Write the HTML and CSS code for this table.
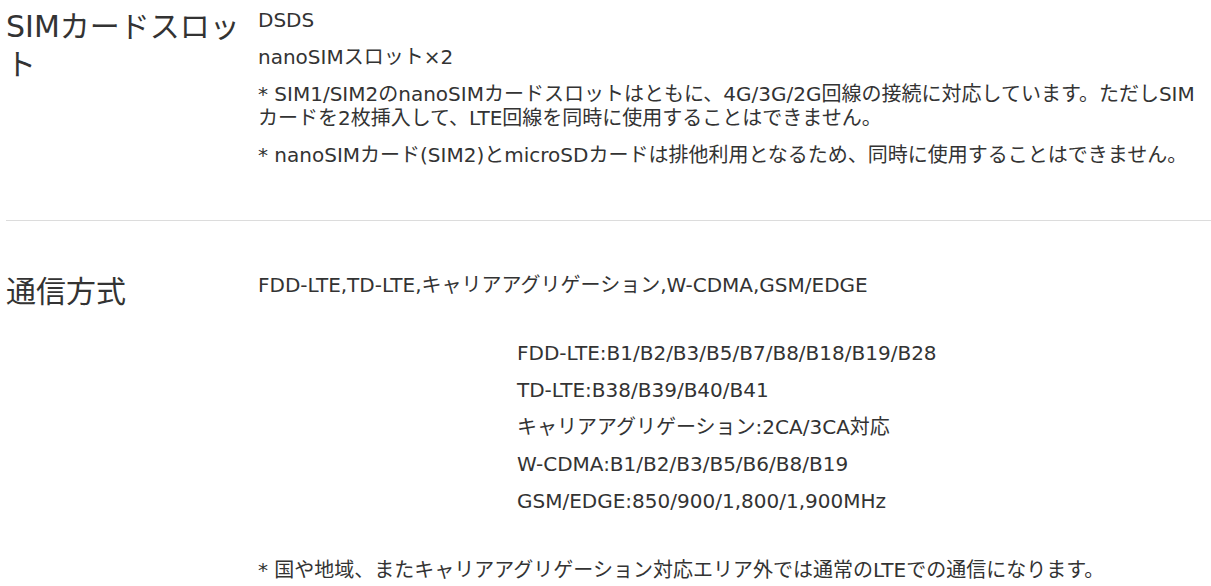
FILE: index.html
```html
<!DOCTYPE html>
<html lang="ja">
<head>
  <meta charset="UTF-8" />
  <title>スペック</title>
  <meta name="viewport" content="width=device-width, initial-scale=1.0" />
  <link rel="stylesheet" href="styles.css">
</head>
<body>

  <div class="spec">

    <div class="spec-row first">
      <div class="spec-label">SIMカードスロット</div>
      <div class="spec-body">
        <p>DSDS</p>
        <p>nanoSIMスロット×2</p>
        <p>* SIM1/SIM2のnanoSIMカードスロットはともに、4G/3G/2G回線の接続に対応しています。ただしSIMカードを2枚挿入して、LTE回線を同時に使用することはできません。</p>
        <p>* nanoSIMカード(SIM2)とmicroSDカードは排他利用となるため、同時に使用することはできません。</p>
      </div>
    </div>

    <div class="spec-row">
      <div class="spec-label">通信方式</div>
      <div class="spec-body">
        <p>FDD-LTE,TD-LTE,キャリアアグリゲーション,W-CDMA,GSM/EDGE</p>
        <div class="bands">
          <p>FDD-LTE:B1/B2/B3/B5/B7/B8/B18/B19/B28</p>
          <p>TD-LTE:B38/B39/B40/B41</p>
          <p>キャリアアグリゲーション:2CA/3CA対応</p>
          <p>W-CDMA:B1/B2/B3/B5/B6/B8/B19</p>
          <p>GSM/EDGE:850/900/1,800/1,900MHz</p>
        </div>
        <p>* 国や地域、またキャリアアグリゲーション対応エリア外では通常のLTEでの通信になります。</p>
      </div>
    </div>

  </div>

</body>
</html>
```

FILE: styles.css
```css
:root {
  --texto: #333;
  --linha: #dcdcdc;
}

body {
  margin: 0;
  font-family: "DejaVu Sans", "Noto Sans CJK JP", sans-serif;
  color: var(--texto);
  background: #fff;
}

.spec {
  padding-left: 6px;
}

.spec-row {
  display: flex;
  padding: 52px 0 24px;
  border-bottom: 1px solid var(--linha);
}

.spec-row.first {
  padding-top: 8px;
  padding-bottom: 40px;
}

.spec-label {
  width: 252px;
  flex-shrink: 0;
  font-size: 30px;
  line-height: 38px;
}

.spec-body {
  flex: 1;
  font-size: 20px;
  line-height: 24px;
}

.spec-body p {
  margin: 0 0 13px;
}

.bands {
  margin: 44px 0 45px;
  padding-left: 259px;
}
```
